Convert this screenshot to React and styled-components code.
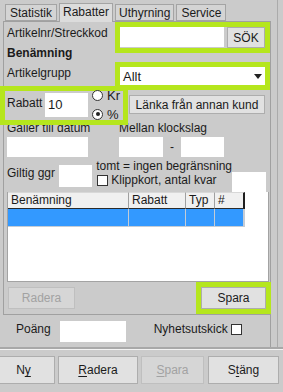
import React from 'react';
import styled, { createGlobalStyle } from 'styled-components';

const GlobalStyle = createGlobalStyle`
  html, body { margin:0; padding:0; background:#cbcbcb; }
  * { box-sizing:border-box; }
`;

const Window = styled.div`
  width:283px;
  height:392px;
  overflow:hidden;
  background:#cbcbcb;
  font-family:"Liberation Sans", Arial, sans-serif;
  font-size:12px;
  color:#1b1b1b;
  display:flex;
  flex-direction:column;
`;

const Upper = styled.div`
  display:flex;
  height:350px;
  border-bottom:1px solid #f2f2f2;
  box-shadow:inset 0 -2px 0 #a8a8a8;
`;

const LeftCol = styled.div`
  width:271px;
  display:flex;
  flex-direction:column;
`;

const RightStrip = styled.div`
  width:12px;
  height:347px;
  & div {
    width:7px;
    height:100%;
    border-right:1px solid #ababab;
  }
`;

const TabBar = styled.div`
  display:flex;
  align-items:flex-end;
  gap:2px;
  height:21px;
  padding-left:5px;
`;

const Tab = styled.div`
  height:${(p) => (p.active ? '19px' : '17px')};
  padding:0 ${(p) => p.pad}px;
  line-height:16px;
  background:${(p) => (p.active ? '#dcdcdc' : '#d4d4d4')};
  border:1px solid #a4a4a4;
  border-bottom:${(p) => (p.active ? 'none' : '1px solid #a4a4a4')};
  margin-bottom:${(p) => (p.active ? '-1px' : '0')};
  position:relative;
  z-index:${(p) => (p.active ? 2 : 0)};
`;

const Panel = styled.div`
  margin-left:3px;
  width:268px;
  height:294px;
  border:1px solid #a0a0a0;
  display:flex;
  flex-direction:column;
`;

const Highlight = styled.div`
  border:5px solid #b5e61d;
  position:relative;
  z-index:1;
  display:flex;
  align-items:flex-start;
`;

const TopSection = styled.div`
  display:flex;
`;

const LabelCol = styled.div`
  width:111px;
  padding:4px 0 0 3px;
  display:flex;
  flex-direction:column;
  gap:6px;
`;

const Label = styled.div`
  line-height:14px;
  white-space:nowrap;
  font-weight:${(p) => (p.bold ? 'bold' : 'normal')};
`;

const ControlCol = styled.div`
  width:155px;
  display:flex;
  flex-direction:column;
  gap:9px;
`;

const TextBox = styled.div`
  background:#fff;
  width:${(p) => (p.w ? p.w + 'px' : 'auto')};
  flex:${(p) => (p.w ? 'none' : '1')};
  height:${(p) => p.h || 20}px;
  margin-top:${(p) => p.mt || 0}px;
  margin-left:${(p) => p.ml || 0}px;
  padding-left:3px;
  line-height:${(p) => p.h || 20}px;
  font-size:13px;
`;

const Button = styled.div`
  height:${(p) => p.h || 21}px;
  width:${(p) => p.w}px;
  margin-top:${(p) => p.mt || 0}px;
  margin-left:${(p) => p.ml || 0}px;
  background:${(p) => (p.disabled ? '#d6d6d6' : '#e1e1e1')};
  border:1px solid ${(p) => (p.disabled ? '#bfbfbf' : '#adadad')};
  color:${(p) => (p.disabled ? '#a2a2a2' : '#1b1b1b')};
  display:flex;
  align-items:center;
  justify-content:center;
  white-space:nowrap;
  flex:none;
  & u { text-underline-offset:2px; }
`;

const Select = styled.div`
  flex:1;
  height:18px;
  background:#fff;
  display:flex;
  align-items:center;
  justify-content:space-between;
  padding:0 2px 0 3px;
  font-size:13px;
`;

const Arrow = styled.div`
  width:0;
  height:0;
  border-left:4px solid transparent;
  border-right:4px solid transparent;
  border-top:5px solid #222;
  margin-right:1px;
`;

const RabattRow = styled.div`
  display:flex;
  align-items:flex-start;
  margin-top:-4px;
`;

const RabattBox = styled(Highlight)`
  margin-left:-4px;
  width:128px;
  height:39px;
`;

const RadioGroup = styled.div`
  display:flex;
  flex-direction:column;
  gap:5px;
  margin:-3px 0 0 4px;
`;

const RadioRow = styled.div`
  display:flex;
  align-items:center;
  height:14px;
  gap:4px;
  font-size:13px;
`;

const Radio = styled.div`
  width:11px;
  height:11px;
  border-radius:50%;
  background:#fff;
  border:1px solid #333;
  display:flex;
  align-items:center;
  justify-content:center;
  &::after {
    content:'';
    width:4px;
    height:4px;
    border-radius:50%;
    background:${(p) => (p.checked ? '#222' : 'transparent')};
  }
`;

const DateRow = styled.div`
  display:flex;
  margin-top:-4px;
`;

const Field = styled.div`
  width:${(p) => p.w}px;
  padding-left:${(p) => p.pl || 0}px;
  display:flex;
  flex-direction:column;
  gap:2px;
`;

const TimeRow = styled.div`
  display:flex;
  align-items:center;
  & span {
    width:18px;
    text-align:center;
  }
`;

const GiltigRow = styled.div`
  display:flex;
  align-items:flex-start;
  height:35px;
`;

const TextBlock = styled.div`
  margin:2px 0 0 4px;
  display:flex;
  flex-direction:column;
`;

const CheckRow = styled.div`
  display:flex;
  align-items:center;
  height:14px;
  gap:3px;
`;

const Check = styled.div`
  width:11px;
  height:11px;
  background:#fff;
  border:1px solid #333;
  margin-left:${(p) => p.ml || 0}px;
  flex:none;
`;

const Table = styled.div`
  margin-left:3px;
  width:262px;
  height:91px;
  background:#fff;
  border:1px solid #a3a3a3;
  border-top:none;
`;

const TRow = styled.div`
  display:flex;
  width:237px;
  height:${(p) => p.h}px;
`;

const Cell = styled.div`
  width:${(p) => p.w}px;
  flex:none;
  padding-left:3px;
  line-height:15px;
  background:${(p) => (p.head ? '#f0f0f0' : '#3399ff')};
  border-right:1px solid ${(p) => (p.head ? '#a0a0a0' : '#c4ccd6')};
  border-bottom:1px solid ${(p) => (p.head ? '#2b2b2b' : '#c4ccd6')};
  border-top:${(p) => (p.head ? '1px solid #d8d8d8' : 'none')};
  &:last-child { border-right:2px solid ${(p) => (p.head ? '#1e1e1e' : '#c4ccd6')}; }
`;

const ActionRow = styled.div`
  display:flex;
  align-items:flex-start;
`;

const SparaBox = styled(Highlight)`
  margin-left:auto;
  margin-right:-1px;
  width:75px;
  height:32px;
`;

const PointsRow = styled.div`
  height:32px;
  display:flex;
  align-items:center;
  border-right:1px solid #a0a0a0;
  & > ${Label} { margin-top:-4px; }
  & > ${Check} { margin-top:-3px; }
`;

const BottomRow = styled.div`
  display:flex;
  gap:3px;
  margin:6px 0 0 -8px;
`;

const App = () => {
  return (
    <Window>
      <GlobalStyle />
      <Upper>
        <LeftCol>
          <TabBar>
            <Tab pad={4}>Statistik</Tab>
            <Tab pad={3} active>Rabatter</Tab>
            <Tab pad={3}>Uthyrning</Tab>
            <Tab pad={4}>Service</Tab>
          </TabBar>
          <Panel>
            <TopSection>
              <LabelCol>
                <Label>Artikelnr/Streckkod</Label>
                <Label bold>Benämning</Label>
                <Label>Artikelgrupp</Label>
              </LabelCol>
              <ControlCol>
                <Highlight style={{ gap: 3 }}>
                  <TextBox />
                  <Button w={38}>SÖK</Button>
                </Highlight>
                <Highlight>
                  <Select>
                    Allt
                    <Arrow />
                  </Select>
                </Highlight>
              </ControlCol>
            </TopSection>

            <RabattRow>
              <RabattBox>
                <Label style={{ width: 40, paddingLeft: 2, marginTop: 5 }}>Rabatt</Label>
                <TextBox w={43} h={24} mt={2}>10</TextBox>
                <RadioGroup>
                  <RadioRow><Radio />Kr</RadioRow>
                  <RadioRow><Radio checked />%</RadioRow>
                </RadioGroup>
              </RabattBox>
              <Button w={136} h={19} mt={9} ml={1}>
                Länka från annan kund
              </Button>
            </RabattRow>

            <DateRow>
              <Field w={115} pl={3}>
                <Label>Gäller till datum</Label>
                <TextBox w={81} />
              </Field>
              <Field w={120}>
                <Label>Mellan klockslag</Label>
                <TimeRow>
                  <TextBox w={44} />
                  <span>-</span>
                  <TextBox w={43} />
                </TimeRow>
              </Field>
            </DateRow>

            <GiltigRow>
              <Label style={{ width: 56, paddingLeft: 3, marginTop: 9 }}>Giltig ggr</Label>
              <TextBox w={33} h={22} mt={8} />
              <TextBlock>
                <Label>tomt = ingen begränsning</Label>
                <CheckRow>
                  <Check ml={1} />
                  Klippkort, antal kvar
                </CheckRow>
              </TextBlock>
              <TextBox w={34} mt={15} style={{ marginLeft: 'auto', marginRight: 4 }} />
            </GiltigRow>

            <Table>
              <TRow h={17}>
                <Cell head w={121}>Benämning</Cell>
                <Cell head w={57}>Rabatt</Cell>
                <Cell head w={29}>Typ</Cell>
                <Cell head w={30}>#</Cell>
              </TRow>
              <TRow h={18}>
                <Cell w={121} />
                <Cell w={57} />
                <Cell w={29} />
                <Cell w={30} />
              </TRow>
            </Table>

            <ActionRow>
              <Button disabled w={67} h={22} mt={5} ml={4}>Radera</Button>
              <SparaBox>
                <Button w={65} h={22}>Spara</Button>
              </SparaBox>
            </ActionRow>
          </Panel>

          <PointsRow>
            <Label style={{ marginLeft: 16 }}>Poäng</Label>
            <TextBox w={66} h={21} ml={9} />
            <Label style={{ marginLeft: 28 }}>Nyhetsutskick</Label>
            <Check ml={3} />
          </PointsRow>
        </LeftCol>
        <RightStrip><div /></RightStrip>
      </Upper>

      <BottomRow>
        <Button w={63} h={28}><span>N<u>y</u></span></Button>
        <Button w={80} h={28}><span><u>R</u>adera</span></Button>
        <Button disabled w={63} h={28}><span><u>S</u>para</span></Button>
        <Button w={71} h={28} ml={1}><span>S<u>t</u>äng</span></Button>
      </BottomRow>
    </Window>
  );
};

export default App;
